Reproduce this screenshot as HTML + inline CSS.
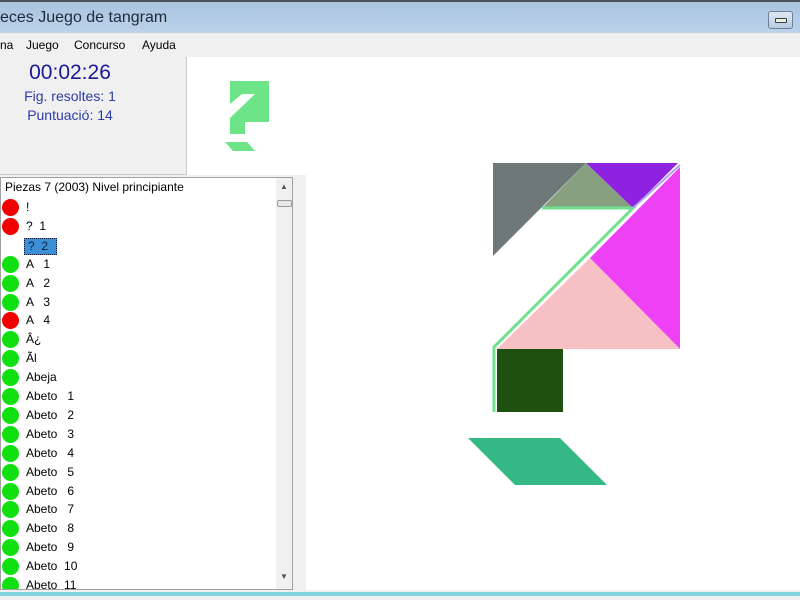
<!DOCTYPE html>
<html><head><meta charset="utf-8"><style>
*{margin:0;padding:0;box-sizing:border-box}
body{width:800px;height:600px;overflow:hidden;background:#f0f0f0;font-family:"Liberation Sans",sans-serif;position:relative}
.title{position:absolute;left:0;top:0;width:800px;height:33px;background:linear-gradient(#a9c3df,#bcd3ea);border-top:2px solid #4a5058}
.title span{position:absolute;left:0;top:7px;font-size:16px;color:#1d2a3a}
.minb{position:absolute;left:768px;top:9px;width:25px;height:18px;border:1px solid #6b7f95;border-radius:3px;background:linear-gradient(#dde8f4,#b8cadf)}
.minb i{position:absolute;left:6px;top:6px;width:12px;height:5px;border:1px solid #34404c;background:#e8f2d8;border-radius:1px}
.menu{position:absolute;left:0;top:33px;width:800px;height:24px;background:#f0f0f0;font-size:12px;color:#000}
.menu span{position:absolute;top:5px}
.info{position:absolute;left:0;top:57px;width:187px;height:118px;background:#f0f0f0;border-right:1px solid #c8c8c8;border-bottom:1px solid #c8c8c8;text-align:center;color:#1c2a9a}
.prev{position:absolute;left:187px;top:57px;width:119px;height:118px;background:#fff}
.list{position:absolute;left:0;top:177px;width:293px;height:413px;background:#fff;border:1px solid #a0a0a0;overflow:hidden}
.sb{position:absolute;left:275px;top:0;width:17px;height:411px;background:#f0f0f0}
.row{position:absolute;left:0;height:19px;font-size:12px;color:#000;white-space:pre}
.dot{position:absolute;left:2px;width:17px;height:17px;border-radius:50%}
.main{position:absolute;left:306px;top:57px;width:494px;height:533px;background:#fff}
.bot{position:absolute;left:0;top:592px;width:800px;height:4px;background:#7fd4e0}
</style></head><body>
<div class="title"><span>eces Juego de tangram</span><div class="minb"><i></i></div></div>
<div class="menu"><span style="left:0">na</span><span style="left:26px">Juego</span><span style="left:74px">Concurso</span><span style="left:142px">Ayuda</span></div>
<div class="info">
<div style="position:absolute;left:0;width:140px;top:4px;font-size:21px;color:#1a1a99">00:02:26</div>
<div style="position:absolute;left:0;width:140px;top:31px;font-size:14px;color:#2b3ca8">Fig. resoltes: 1</div>
<div style="position:absolute;left:0;width:140px;top:50px;font-size:14px;color:#2b3ca8">Puntuació: 14</div>
</div>
<div class="prev"></div>
<svg style="position:absolute;left:0;top:0" width="800" height="600">
<polygon points="230,81 269,81 269,122 245,122 245,134 230,134 230,118 255,94 242,94 230,104" fill="#6ee488"/>
<polygon points="225,142 247,142 255,151 233,151" fill="#6ee488"/>
</svg>
<div class="list">
<div class="sb"><div style="position:absolute;left:4px;top:4px;font-size:8px;color:#555">▲</div><div style="position:absolute;left:1px;top:22px;width:15px;height:7px;border:1px solid #999;border-radius:2px;background:#e8e8e8"></div><div style="position:absolute;left:4px;top:394px;font-size:8px;color:#555">▼</div></div>
<div class="row" style="top:2px;left:4px">Piezas 7 (2003) Nivel principiante</div>
</div>
<div class="main"></div>
<svg style="position:absolute;left:0;top:0" width="800" height="600">
<polygon points="493,163 586,163 493,256" fill="#6f7878"/>
<polygon points="586,163 633,208 542,208" fill="#86a080"/>
<polygon points="586,163 678,163 633,208" fill="#8e22e0"/>
<polygon points="680,167 680,349 590,258" fill="#ee40f4"/>
<polygon points="590,258 497,349 680,349" fill="#f6c0c4"/>
<polyline points="542,208 633,208 494,347 494,412" fill="none" stroke="#70e090" stroke-width="3"/>
<line x1="633" y1="208" x2="680" y2="165" stroke="#b0a0f0" stroke-width="2"/>
<rect x="497" y="349" width="66" height="63" fill="#1e5010"/>
<polygon points="468,438 560,438 607,485 515,485" fill="#34b884"/>
</svg>
<div class="bot"></div>
<script>
var items=[["r","!"],["r","?  1"],["s","?  2"],["g","A   1"],["g","A   2"],["g","A   3"],["r","A   4"],["g","Â¿"],["g","Ãl"],["g","Abeja"],["g","Abeto   1"],["g","Abeto   2"],["g","Abeto   3"],["g","Abeto   4"],["g","Abeto   5"],["g","Abeto   6"],["g","Abeto   7"],["g","Abeto   8"],["g","Abeto   9"],["g","Abeto  10"],["g","Abeto  11"]];
var h="";items.forEach(function(it,i){var y=198+i*18.9;
if(it[0]=="s"){h+='<div class="row" style="top:'+(y+2)+'px;left:24px;width:33px;height:17px;background:#3d8fd6;border:1px dotted #113;color:#0c2240;padding-left:3px;line-height:15px">'+it[1]+'</div>';}
else{h+='<div class="dot" style="top:'+(y+1)+'px;background:'+(it[0]=="r"?"#f00000":"#10e010")+'"></div><div class="row" style="top:'+(y+2)+'px;left:26px">'+it[1]+'</div>';}});
var d=document.createElement('div');d.style.cssText="position:absolute;left:0;top:0;width:275px;height:589px;overflow:hidden";d.innerHTML=h;document.body.appendChild(d);
</script>
</body></html>
